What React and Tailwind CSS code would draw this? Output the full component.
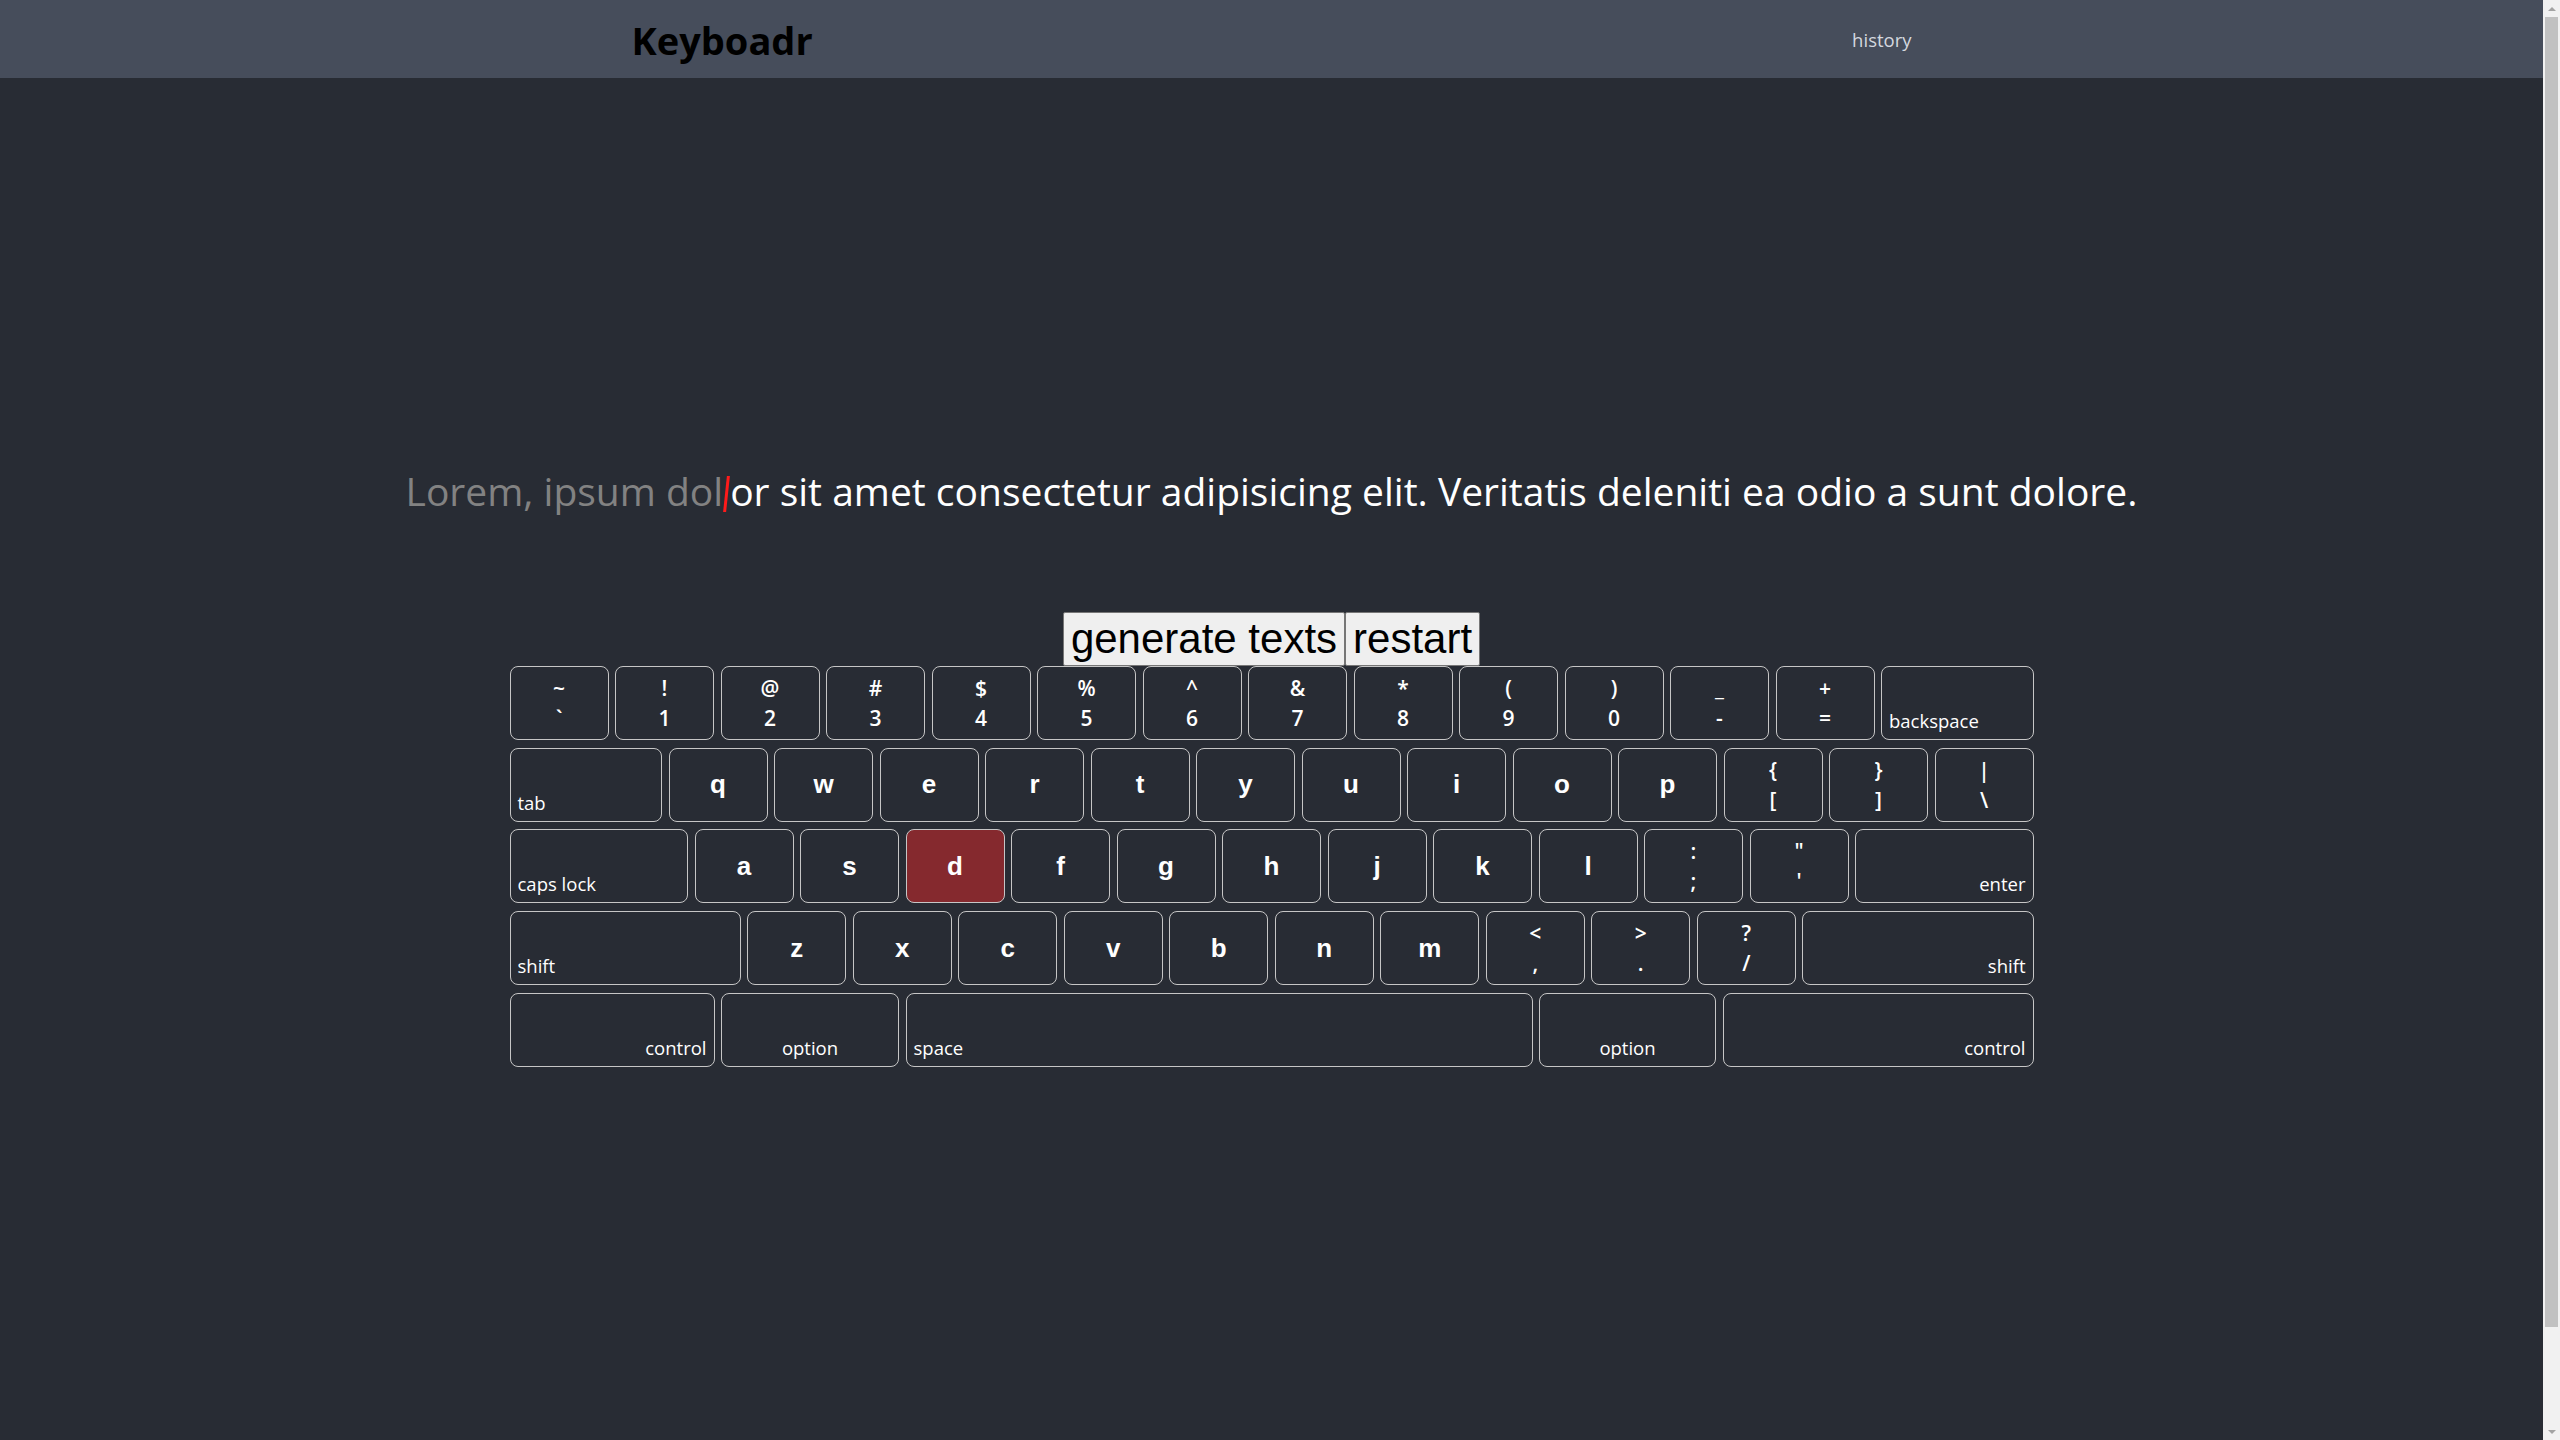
import React from "react";

const numRow = [
  ["~", "`"], ["!", "1"], ["@", "2"], ["#", "3"], ["$", "4"], ["%", "5"], ["^", "6"],
  ["&", "7"], ["*", "8"], ["(", "9"], [")", "0"], ["_", "-"], ["+", "="],
];

function SymKey({ top, bottom }) {
  return (
    <div className="w-[99px] h-[74px] shrink-0 rounded-lg border border-[#c6c6c6] flex flex-col items-center justify-center text-white font-['Open_Sans',sans-serif] font-semibold text-[21px] leading-[30px]">
      <span>{top}</span>
      <span>{bottom}</span>
    </div>
  );
}

function LetterKey({ ch, hl }) {
  return (
    <div
      className={
        hl
          ? "w-[99px] h-[74px] shrink-0 rounded-lg border border-[#c6c6c6] bg-[#85292e] flex items-center justify-center text-white font-['Liberation_Sans',Arial,sans-serif] font-bold text-[26px]"
          : "w-[99px] h-[74px] shrink-0 rounded-lg border border-[#c6c6c6] flex items-center justify-center text-white font-['Liberation_Sans',Arial,sans-serif] font-bold text-[26px]"
      }
    >
      {ch}
    </div>
  );
}

function ModKey({ label, cls }) {
  return (
    <div className={"h-[74px] rounded-lg border border-[#c6c6c6] flex items-end px-[7px] pb-[6px] text-white font-['Open_Sans',sans-serif] text-[18.5px] leading-[24px] " + cls}>
      {label}
    </div>
  );
}

export default function App() {
  return (
    <div className="flex h-screen w-full overflow-hidden bg-[#282c34]">
      <div className="flex-1 min-w-0 flex flex-col">
        <header className="h-[78px] shrink-0 bg-[#464d5b]">
          <div className="mx-auto w-[1280px] h-full flex items-center justify-between">
            <h1 className="font-['Open_Sans',sans-serif] font-bold text-[38px] leading-none text-black mt-[2px]">Keyboadr</h1>
            <a className="font-['Open_Sans',sans-serif] text-[18.5px] text-[#d4d8df] mt-[2px]">history</a>
          </div>
        </header>
        <main className="flex flex-col items-center pt-[386px]">
          <p className="font-['Open_Sans',sans-serif] text-[39px] leading-[54px] text-white whitespace-nowrap">
            <span className="text-[#828282]">Lorem, ipsum dol</span>
            <span className="inline-block w-[3px] h-[36px] bg-[#ff1a1a] skew-x-[-6deg] align-[-6px] mx-[2px]"></span>
            <span>or sit amet consectetur adipisicing elit. Veritatis deleniti ea odio a sunt dolore.</span>
          </p>
          <div className="mt-[94px] flex">
            <button className="bg-[#efefef] border border-[#767676] rounded-[2px] px-[7px] py-[2px] text-black font-['Liberation_Sans',Arial,sans-serif] text-[42px] leading-[48px]">generate texts</button>
            <button className="bg-[#efefef] border border-[#767676] rounded-[2px] px-[7px] py-[2px] text-black font-['Liberation_Sans',Arial,sans-serif] text-[42px] leading-[48px]">restart</button>
          </div>
          <div className="w-[1524px] flex flex-col gap-[7.7px]">
            <div className="flex gap-[6.5px]">
              {numRow.map(([t, b], i) => (
                <SymKey key={i} top={t} bottom={b} />
              ))}
              <ModKey label="backspace" cls="flex-1 justify-start" />
            </div>
            <div className="flex gap-[6.5px]">
              <ModKey label="tab" cls="flex-1 justify-start" />
              {"qwertyuiop".split("").map((c) => (
                <LetterKey key={c} ch={c} />
              ))}
              <SymKey top="{" bottom="[" />
              <SymKey top="}" bottom="]" />
              <SymKey top="|" bottom="\" />
            </div>
            <div className="flex gap-[6.5px]">
              <ModKey label="caps lock" cls="flex-1 justify-start" />
              {"asdfghjkl".split("").map((c) => (
                <LetterKey key={c} ch={c} hl={c === "d"} />
              ))}
              <SymKey top=":" bottom=";" />
              <SymKey top={'"'} bottom="'" />
              <ModKey label="enter" cls="flex-1 justify-end" />
            </div>
            <div className="flex gap-[6.5px]">
              <ModKey label="shift" cls="flex-1 justify-start" />
              {"zxcvbnm".split("").map((c) => (
                <LetterKey key={c} ch={c} />
              ))}
              <SymKey top="<" bottom="," />
              <SymKey top=">" bottom="." />
              <SymKey top="?" bottom="/" />
              <ModKey label="shift" cls="flex-1 justify-end" />
            </div>
            <div className="flex gap-[6.5px]">
              <ModKey label="control" cls="w-[205px] shrink-0 justify-end" />
              <ModKey label="option" cls="w-[178px] shrink-0 justify-center" />
              <ModKey label="space" cls="w-[627px] shrink-0 justify-start" />
              <ModKey label="option" cls="w-[177px] shrink-0 justify-center" />
              <ModKey label="control" cls="flex-1 justify-end" />
            </div>
          </div>
        </main>
      </div>
      <div className="w-[17px] shrink-0 h-full bg-[#f1f1f1] flex flex-col items-center">
        <div className="h-[17px] w-full flex items-center justify-center">
          <div className="w-0 h-0 border-l-[4px] border-r-[4px] border-b-[4px] border-l-transparent border-r-transparent border-b-[#a3a3a3]"></div>
        </div>
        <div className="w-[13px] h-[1310px] bg-[#c1c1c1]"></div>
        <div className="flex-1 w-full flex items-end justify-center pb-[6px]">
          <div className="w-0 h-0 border-l-[4px] border-r-[4px] border-t-[4px] border-l-transparent border-r-transparent border-t-[#a3a3a3]"></div>
        </div>
      </div>
    </div>
  );
}
